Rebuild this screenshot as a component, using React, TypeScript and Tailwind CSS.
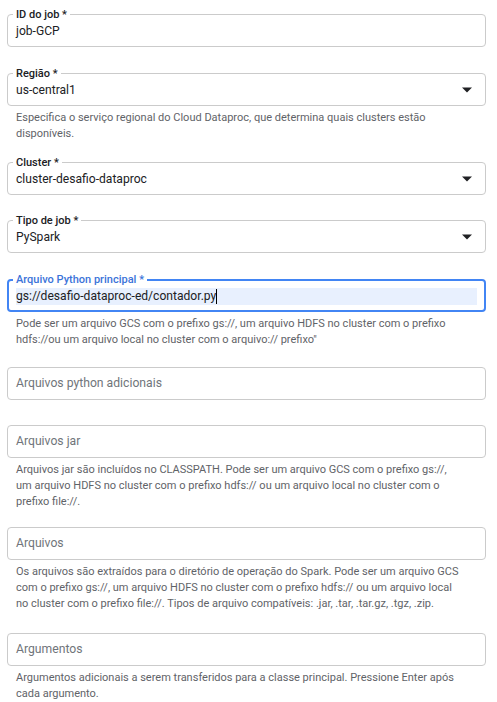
import React from 'react';

type FieldProps = {
  label?: string;
  value?: string;
  placeholder?: string;
  select?: boolean;
  focused?: boolean;
  helper?: React.ReactNode;
  className?: string;
};

function Field({ label, value, placeholder, select, focused, helper, className }: FieldProps) {
  return (
    <div className={className}>
      <div
        className={
          focused
            ? 'relative h-[33px] rounded-[4px] border-2 border-[#4285f4] flex items-center px-[7px]'
            : 'relative h-[33px] rounded-[4px] border border-[#cbcbcb] flex items-center px-[8px]'
        }
      >
        {label && (
          <span
            className={
              focused
                ? 'absolute left-[4px] -top-[8px] bg-white px-[3px] text-[11px] leading-[13px] font-medium text-[#3b73d9]'
                : 'absolute left-[5px] -top-[7px] bg-white px-[3px] text-[11px] leading-[13px] font-medium text-[#202124]'
            }
          >
            {label}
          </span>
        )}
        {focused ? (
          <div className="flex-1 h-[17px] mt-[2px] bg-[#e8f0fe] flex items-center text-[12.1px] text-[#202124]">
            <span>{value}</span>
            <span className="w-px h-[15px] bg-black" />
          </div>
        ) : value ? (
          <span className="flex-1 mt-[2px] text-[12.1px] text-[#202124]">{value}</span>
        ) : (
          <span className="flex-1 text-[12.2px] text-[#70757a]">{placeholder}</span>
        )}
        {select && (
          <svg width="10" height="6" viewBox="0 0 10 5" className="mr-[5px] mt-[1px]">
            <path d="M0 0 L10 0 L5 5 Z" fill="#202124" />
          </svg>
        )}
      </div>
      {helper && (
        <p className="mt-[4px] pl-[9px] pr-[20.5px] text-[11px] leading-[16px] text-[#5f6368]">{helper}</p>
      )}
    </div>
  );
}

export default function App() {
  return (
    <main className="w-[497px] min-h-[702px] bg-white pl-[7px] pr-[11px] pt-[14px] font-['Roboto',sans-serif]">
      <Field label="ID do job *" value="job-GCP" />
      <Field
        className="mt-[26px]"
        label="Região *"
        value="us-central1"
        select
        helper="Especifica o serviço regional do Cloud Dataproc, que determina quais clusters estão disponíveis."
      />
      <Field className="mt-[20px]" label="Cluster *" value="cluster-desafio-dataproc" select />
      <Field className="mt-[25px]" label="Tipo de job *" value="PySpark" select />
      <Field
        className="mt-[26px]"
        label="Arquivo Python principal *"
        value="gs://desafio-dataproc-ed/contador.py"
        focused
        helper={'Pode ser um arquivo GCS com o prefixo gs://, um arquivo HDFS no cluster com o prefixo hdfs://ou um arquivo local no cluster com o arquivo:// prefixo"'}
      />
      <Field className="mt-[19px]" placeholder="Arquivos python adicionais" />
      <Field
        className="mt-[25px]"
        placeholder="Arquivos jar"
        helper={
          <>
            Arquivos jar são incluídos no CLASSPATH. Pode ser um arquivo GCS com o prefixo gs://,
            <br />
            um arquivo HDFS no cluster com o prefixo hdfs:// ou um arquivo local no cluster com o prefixo file://.
          </>
        }
      />
      <Field
        className="mt-[17px]"
        placeholder="Arquivos"
        helper="Os arquivos são extraídos para o diretório de operação do Spark. Pode ser um arquivo GCS com o prefixo gs://, um arquivo HDFS no cluster com o prefixo hdfs:// ou um arquivo local no cluster com o prefixo file://. Tipos de arquivo compatíveis: .jar, .tar, .tar.gz, .tgz, .zip."
      />
      <Field
        className="mt-[21px]"
        placeholder="Argumentos"
        helper="Argumentos adicionais a serem transferidos para a classe principal. Pressione Enter após cada argumento."
      />
    </main>
  );
}
